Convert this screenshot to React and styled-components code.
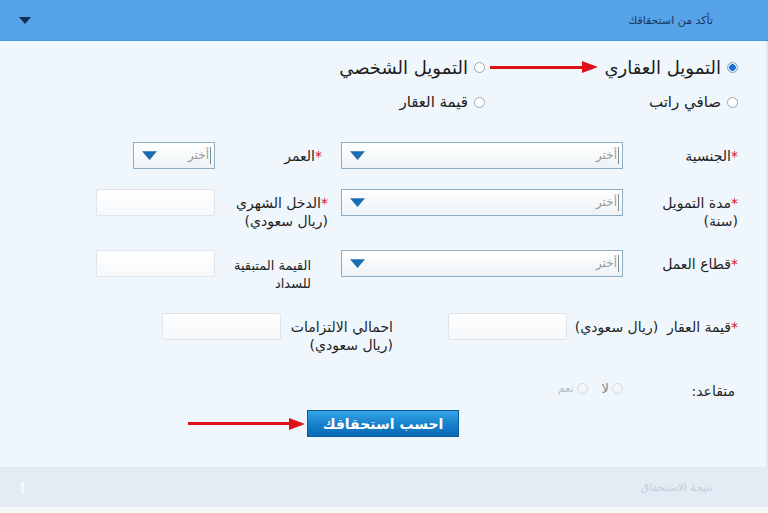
import React from 'react';
import styled, { createGlobalStyle } from 'styled-components';

const Global = createGlobalStyle`
  html, body { margin: 0; padding: 0; background: #f4f8fb; }
  body { font-family: "DejaVu Sans", "Noto Sans", sans-serif; }
  * { box-sizing: border-box; }
`;

const Panel = styled.div`
  width: 768px;
  height: 513px;
  direction: rtl;
  display: flex;
  flex-direction: column;
  background: #f4f8fb;
`;

const Header = styled.div`
  height: 41px;
  flex: none;
  background: #56a3e9;
  border-bottom: 1px solid #4b95d9;
  display: flex;
  align-items: center;
  justify-content: space-between;
  padding: 0 55px 0 19px;
`;

const HeaderTitle = styled.span`
  font-size: 11px;
  color: #17365a;
`;

const Body = styled.div`
  height: 426px;
  flex: none;
  background: #eff7fc;
  border-right: 2px solid #dde8f0;
  padding: 14px 28px 0 0;
  display: flex;
  flex-direction: column;
`;

const TypeGrid = styled.div`
  display: grid;
  grid-template-columns: 253px 253px;
  row-gap: ${p => p.$gap}px;
  margin-bottom: 28px;
`;

const Option = styled.label`
  display: flex;
  align-items: center;
  gap: 6px;
  height: 24px;
  white-space: nowrap;
  font-size: ${p => p.$size}px;
  color: #1c1c1c;
`;

const Radio = styled.span`
  width: 11px;
  height: 11px;
  flex: none;
  border-radius: 50%;
  border: 1px solid ${p => (p.$checked ? '#7ea9cf' : p.$muted ? '#d3d9de' : '#9aa6b0')};
  background: ${p => (p.$checked ? 'radial-gradient(circle, #1d6fd0 0 3px, #dbe9f6 3.5px)' : p.$muted ? '#f3f6f8' : '#fff')};
`;

const Arrow = styled.span`
  flex: ${p => (p.$w ? 'none' : 1)};
  width: ${p => (p.$w ? `${p.$w}px` : 'auto')};
  min-width: 0;
  display: flex;
  direction: ltr;
  align-items: center;
  margin-left: ${p => p.$ml || 0}px;
`;

const ArrowShaft = styled.span`
  flex: 1;
  height: 3px;
  background: #dd1219;
`;

const Form = styled.div`
  display: flex;
  flex-direction: column;
`;

const GridRow = styled.div`
  display: grid;
  grid-template-columns: 115px 282px 126px 119px;
  align-items: start;
  padding-bottom: 20px;
`;

const FlexRow = styled.div`
  display: flex;
  align-items: start;
  padding-bottom: 20px;
`;

const Label = styled.div`
  font-size: ${p => p.$size || 14}px;
  line-height: 18px;
  color: #1f1f1f;
  padding-top: ${p => p.$top || 5}px;
  padding-right: ${p => p.$inset || 0}px;
  width: ${p => (p.$w ? `${p.$w}px` : 'auto')};
  white-space: nowrap;
`;

const Line = styled.span`
  display: block;
`;

const Star = styled.span`
  color: #d7121a;
`;

const Select = styled.div`
  width: ${p => p.$w}px;
  height: 27px;
  border: 1px solid #8eaec6;
  background: linear-gradient(#ffffff, #eef2f5);
  display: flex;
  align-items: center;
  justify-content: space-between;
  padding: 0 3px 0 8px;
`;

const Placeholder = styled.span`
  font-size: 12px;
  color: #9a9a9a;
  border-right: 1px solid #7f8a93;
  padding-right: 1px;
  line-height: 17px;
`;

const Input = styled.div`
  width: ${p => p.$w || 119}px;
  height: 27px;
  border: 1px solid #dfe5ea;
  border-radius: 2px;
  background: linear-gradient(#ffffff, #f6f8fa);
`;

const RetiredRow = styled.div`
  display: grid;
  grid-template-columns: 115px auto;
  align-items: center;
  height: 30px;
  margin-top: 2px;
`;

const RetiredLabel = styled.span`
  font-size: 14px;
  color: #1f1f1f;
  padding-right: 3px;
`;

const RetiredOptions = styled.div`
  display: flex;
  align-items: center;
  gap: 14px;
  margin-top: -6px;
`;

const SmallOption = styled.span`
  display: flex;
  align-items: center;
  gap: 3px;
  font-size: ${p => (p.$faint ? 11 : 13)}px;
  color: ${p => (p.$faint ? '#b4bcc3' : '#7d868e')};
`;

const ButtonRow = styled.div`
  display: flex;
  align-items: center;
  padding-right: 279px;
  margin-top: 4px;
  gap: 2px;
`;

const Button = styled.button`
  width: 152px;
  height: 27px;
  border: 1px solid #0b5c9e;
  background: linear-gradient(#35a3e6, #1480cc 55%, #0c69b3);
  color: #fff;
  font-family: inherit;
  font-size: 14px;
  font-weight: bold;
  padding: 0;
  cursor: pointer;
`;

const Footer = styled.div`
  height: 40px;
  flex: none;
  background: #e3ebf4;
  display: flex;
  align-items: center;
  justify-content: space-between;
  padding: 0 55px 0 19px;
`;

const FooterTitle = styled.span`
  font-size: 11px;
  color: #c3ced9;
`;

const FooterMark = styled.span`
  width: 3px;
  height: 11px;
  background: #f6f9fc;
  margin-left: 2px;
`;

const Triangle = ({ color, w = 12, h = 7 }) => (
  <svg width={w} height={h} viewBox="0 0 12 7">
    <polygon points="0,0 12,0 6,7" fill={color} />
  </svg>
);

const RedArrow = ({ w, ml }) => (
  <Arrow $w={w} $ml={ml}>
    <ArrowShaft />
    <svg width="16" height="12" viewBox="0 0 16 12" style={{ marginLeft: -1, flex: 'none' }}>
      <polygon points="0,0 16,6 0,12" fill="#dd1219" />
    </svg>
  </Arrow>
);

const SelectBox = ({ w }) => (
  <Select $w={w}>
    <Placeholder>أختر</Placeholder>
    <Triangle color="#1b6db2" w={15} h={9} />
  </Select>
);

export default function App() {
  return (
    <>
      <Global />
      <Panel>
        <Header>
          <HeaderTitle>تأكد من استحقاقك</HeaderTitle>
          <Triangle color="#0f2f55" />
        </Header>
        <Body>
          <TypeGrid $gap={11}>
            <Option $size={18}>
              <Radio $checked />
              التمويل العقاري
              <RedArrow ml={5} />
            </Option>
            <Option $size={18}>
              <Radio />
              التمويل الشخصي
            </Option>
            <Option $size={15}>
              <Radio />
              صافي راتب
            </Option>
            <Option $size={15}>
              <Radio />
              قيمة العقار
            </Option>
          </TypeGrid>
          <Form>
            <GridRow>
              <Label><Star>*</Star>الجنسية</Label>
              <SelectBox w={282} />
              <Label $inset={19}><Star>*</Star>العمر</Label>
              <SelectBox w={82} />
            </GridRow>
            <GridRow>
              <Label>
                <Line><Star>*</Star>مدة التمويل</Line>
                <Line>(سنة)</Line>
              </Label>
              <SelectBox w={282} />
              <Label $inset={13}>
                <Line><Star>*</Star>الدخل الشهري</Line>
                <Line>(ريال سعودي)</Line>
              </Label>
              <Input />
            </GridRow>
            <GridRow>
              <Label><Star>*</Star>قطاع العمل</Label>
              <SelectBox w={282} />
              <Label $inset={30} $size={13} $top={7}>
                <Line>القيمة المتبقية</Line>
                <Line>للسداد</Line>
              </Label>
              <Input />
            </GridRow>
            <FlexRow>
              <Label $w={171}><Star>*</Star>قيمة العقار&nbsp; (ريال سعودي)</Label>
              <Input />
              <Label $w={167} $inset={55}>
                <Line>احمالي الالتزامات</Line>
                <Line>(ريال سعودي)</Line>
              </Label>
              <Input />
            </FlexRow>
            <RetiredRow>
              <RetiredLabel>متقاعد:</RetiredLabel>
              <RetiredOptions>
                <SmallOption><Radio $muted />لا</SmallOption>
                <SmallOption $faint><Radio $muted />نعم</SmallOption>
              </RetiredOptions>
            </RetiredRow>
            <ButtonRow>
              <Button>احسب استحقاقك</Button>
              <RedArrow w={117} />
            </ButtonRow>
          </Form>
        </Body>
        <Footer>
          <FooterTitle>نتيجة الاستحقاق</FooterTitle>
          <FooterMark />
        </Footer>
      </Panel>
    </>
  );
}
